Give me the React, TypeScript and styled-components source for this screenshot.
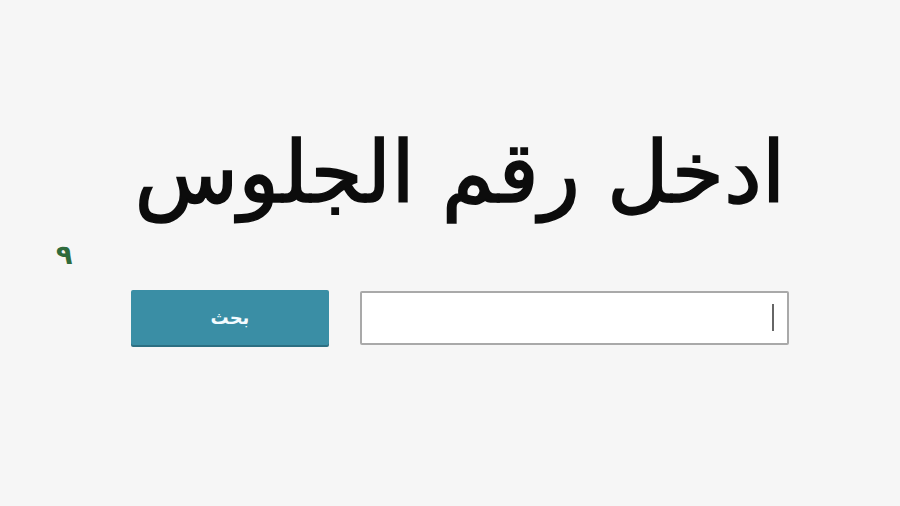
import React from 'react';
import styled, { createGlobalStyle } from 'styled-components';

const GlobalStyle = createGlobalStyle`
  html, body {
    margin: 0;
    padding: 0;
    background: #f6f6f6;
  }
  body {
    font-family: "DejaVu Sans", sans-serif;
  }
`;

const Page = styled.div`
  width: 900px;
  height: 506px;
  box-sizing: border-box;
  padding: 114px 0 0 20px;
  display: flex;
  flex-direction: column;
`;

const Title = styled.h1`
  margin: 0;
  direction: rtl;
  text-align: center;
  font-family: "DejaVu Sans", sans-serif;
  font-weight: 400;
  font-size: 85px;
  line-height: 118px;
  color: #0c0c0c;
  -webkit-text-stroke: 1.6px #0c0c0c;
`;

const MarkerRow = styled.div`
  height: 58px;
  padding: 9px 0 0 36px;
  box-sizing: border-box;
  display: flex;
  align-items: flex-start;
`;

const Marker = styled.span`
  font-family: "DejaVu Sans", sans-serif;
  font-size: 27px;
  font-weight: 700;
  line-height: 28px;
  color: #2f6b3c;
`;

const Form = styled.div`
  display: flex;
  align-items: center;
  gap: 31px;
  padding-left: 111px;
`;

const Button = styled.button`
  width: 198px;
  height: 55px;
  border: none;
  border-radius: 2px;
  background: #3a8ea5;
  box-shadow: 0 2px 0 #2c6f82;
  color: #f4fbff;
  font-family: "DejaVu Sans", sans-serif;
  font-size: 18px;
  font-weight: 700;
  padding: 0;
`;

const Field = styled.div`
  width: 429px;
  height: 54px;
  box-sizing: border-box;
  border: 2px solid #a9a9a9;
  border-radius: 2px;
  background: #ffffff;
  display: flex;
  align-items: center;
  justify-content: flex-end;
  padding-right: 13px;
`;

const Caret = styled.span`
  width: 2px;
  height: 27px;
  background: #666;
`;

export default function App() {
  return (
    <>
      <GlobalStyle />
      <Page>
        <Title>ادخل رقم الجلوس</Title>
        <MarkerRow>
          <Marker>٩</Marker>
        </MarkerRow>
        <Form>
          <Button>بحث</Button>
          <Field>
            <Caret />
          </Field>
        </Form>
      </Page>
    </>
  );
}
